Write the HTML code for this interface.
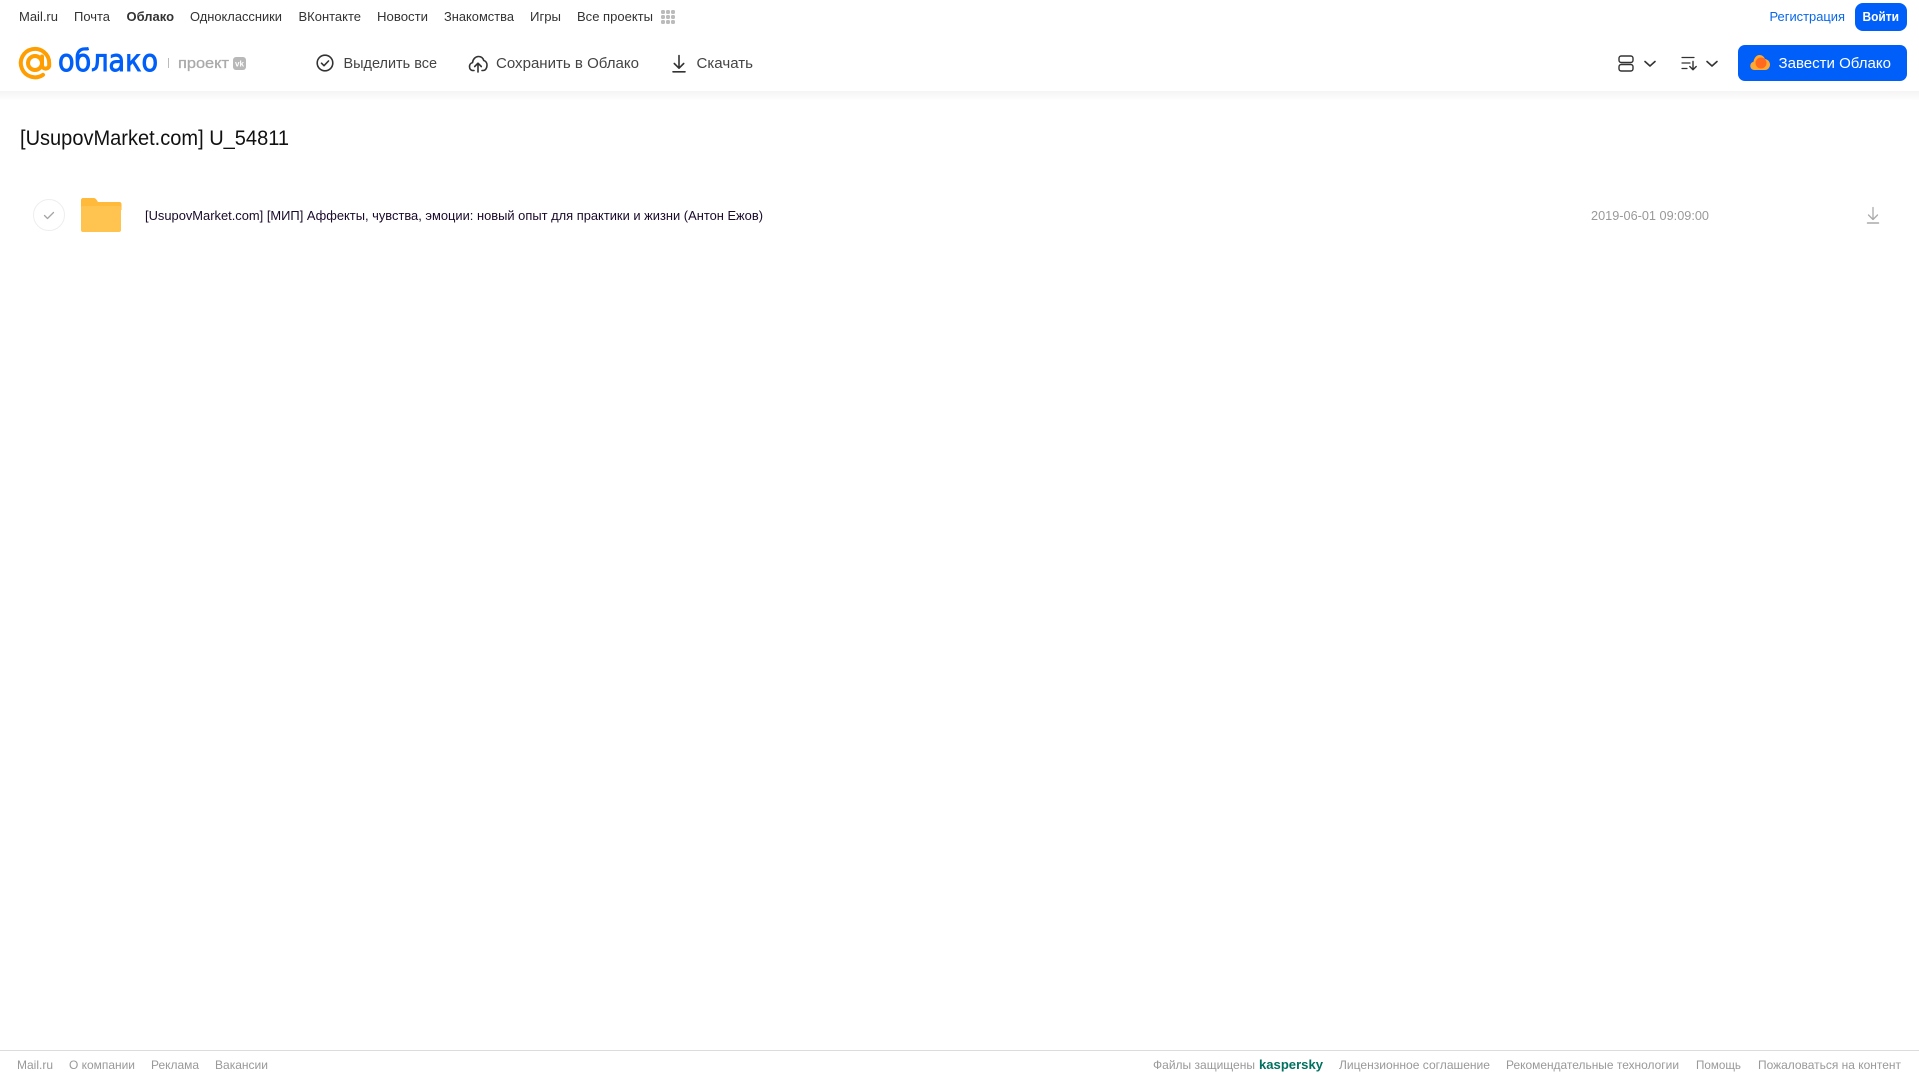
<!DOCTYPE html>
<html lang="ru">
<head>
<meta charset="utf-8">
<title>Облако Mail.ru</title>
<style>
html,body{margin:0;padding:0;width:1919px;height:1079px;overflow:hidden;background:#fff}
svg{display:block;position:absolute;left:0;top:0}
text{font-family:"Liberation Sans",Arial,sans-serif}
.n{font-size:13px;fill:#333}
.t{font-size:15px;fill:#444}
.f{font-size:12px;fill:#999}
</style>
</head>
<body>
<svg width="1919" height="1079" viewBox="0 0 1919 1079" xmlns="http://www.w3.org/2000/svg">
<defs>
<linearGradient id="sh" x1="0" y1="0" x2="0" y2="1"><stop offset="0" stop-color="#f4f4f4"/><stop offset="1" stop-color="#fff"/></linearGradient>
</defs>
<rect x="0" y="91" width="1919" height="10" fill="url(#sh)"/>

<!-- top nav -->
<text class="n" x="19" y="21" textLength="39" lengthAdjust="spacingAndGlyphs">Mail.ru</text>
<text class="n" x="74" y="21" textLength="36" lengthAdjust="spacingAndGlyphs">Почта</text>
<text class="n" x="126.500" y="21" textLength="47.500" lengthAdjust="spacingAndGlyphs" font-weight="700">Облако</text>
<text class="n" x="190" y="21" textLength="92" lengthAdjust="spacingAndGlyphs">Одноклассники</text>
<text class="n" x="298.500" y="21" textLength="62.500" lengthAdjust="spacingAndGlyphs">ВКонтакте</text>
<text class="n" x="377" y="21" textLength="51" lengthAdjust="spacingAndGlyphs">Новости</text>
<text class="n" x="444" y="21" textLength="70" lengthAdjust="spacingAndGlyphs">Знакомства</text>
<text class="n" x="530" y="21" textLength="31" lengthAdjust="spacingAndGlyphs">Игры</text>
<text class="n" x="577" y="21" textLength="76" lengthAdjust="spacingAndGlyphs">Все проекты</text>
<g fill="#bbb">
<rect x="661" y="10" width="4" height="4" rx="1.500"/><rect x="666" y="10" width="4" height="4" rx="1.500"/><rect x="671" y="10" width="4" height="4" rx="1.500"/>
<rect x="661" y="15" width="4" height="4" rx="1.500"/><rect x="666" y="15" width="4" height="4" rx="1.500"/><rect x="671" y="15" width="4" height="4" rx="1.500"/>
<rect x="661" y="20" width="4" height="4" rx="1.500"/><rect x="666" y="20" width="4" height="4" rx="1.500"/><rect x="671" y="20" width="4" height="4" rx="1.500"/>
</g>
<text class="n" x="1769.500" y="21" textLength="75.500" lengthAdjust="spacingAndGlyphs" style="fill:#0a68e8">Регистрация</text>
<rect x="1855" y="3" width="52" height="28" rx="8" fill="#005ff9"/>
<text class="n" x="1862.500" y="21" textLength="36.500" lengthAdjust="spacingAndGlyphs" font-weight="700" style="fill:#fff">Войти</text>

<!-- logo -->
<g fill="none" stroke="#ff9e00" stroke-width="4" stroke-linecap="round">
<circle cx="35" cy="63" r="7"/>
<path d="M42 56.500V65.500a3.700 3.700 0 0 0 7.200 0.500V63A14.200 14.200 0 1 0 43 74.800"/>
</g>
<text x="58" y="71" font-size="30" textLength="100" lengthAdjust="spacingAndGlyphs" fill="#005ff9" stroke="#005ff9" stroke-width=".9" style="font-family:'DejaVu Sans',sans-serif">облако</text>
<rect x="168" y="58" width="1" height="10" fill="#bbb"/>
<text x="178" y="68" font-size="15" textLength="51" lengthAdjust="spacingAndGlyphs" fill="#aaa" stroke="#aaa" stroke-width=".3">проект</text>
<rect x="233" y="57" width="13" height="13" rx="3" fill="#b8b8b8"/>
<text x="235" y="66.500" font-size="8" font-weight="700" textLength="9" lengthAdjust="spacingAndGlyphs" fill="#fff">vk</text>

<!-- toolbar -->
<g fill="none" stroke="#333" stroke-width="1.600" stroke-linecap="round" stroke-linejoin="round">
<circle cx="325" cy="63" r="7.800"/>
<path d="M321.500 63.200l2.500 2.500 4.500-4.700"/>
<path d="M474 70.500H473C470.500 70.500 469.500 68.500 469.500 66.500C469.500 64.500 470.800 63 472.500 62.600C473 59 475.500 56.500 478.500 56.500C481 56.500 483 58 483.800 60.500C485.800 61 487 63 487 65.300C487 68 485.500 70.500 483 70.500H482"/>
<path d="M478 72V63.500M474.700 66.500l3.300-3.300 3.300 3.300"/>
<path d="M679 55.500V68M674.300 63.500l4.700 4.700 4.700-4.700"/>
<path d="M673 71.800H685"/>
</g>
<text class="t" x="343.500" y="68" textLength="93.500" lengthAdjust="spacingAndGlyphs">Выделить все</text>
<text class="t" x="496" y="68" textLength="143" lengthAdjust="spacingAndGlyphs">Сохранить в Облако</text>
<text class="t" x="696.500" y="68" textLength="56.500" lengthAdjust="spacingAndGlyphs">Скачать</text>

<!-- view/sort -->
<g fill="none" stroke="#333" stroke-width="1.400" stroke-linecap="round" stroke-linejoin="round">
<rect x="1619" y="56" width="14" height="6.500" rx="2.200"/>
<rect x="1619" y="64.500" width="14" height="6.500" rx="2.200"/>
<path d="M1645 61.500l5 4.500 5-4.500" stroke-width="1.600"/>
<path d="M1707 61.500l5 4.500 5-4.500" stroke-width="1.600"/>
</g>
<g fill="none" stroke="#333" stroke-width="1.200" stroke-linecap="round" stroke-linejoin="round">
<path d="M1682 57.500h12M1682 63h8M1682 68.500h5"/>
<path d="M1693 61.500V69.500M1689.800 66.500l3.200 3.200 3.200-3.200" stroke-width="1.400"/>
</g>

<!-- CTA -->
<rect x="1738" y="45" width="169" height="36" rx="7" fill="#005ff9"/>
<path d="M1754.500 70C1751.800 70 1750.300 68 1750.300 66C1750.300 64 1751.500 62.300 1753.500 61.800C1754 58 1756.500 55 1759.500 55C1762 55 1764 56.500 1765 59C1768 59.500 1770 61.800 1770 64.500C1770 67.500 1768 70 1765 70z" fill="#ffa930"/>
<circle cx="1761" cy="63" r="5.500" fill="#ff6a1f"/>
<text x="1778.500" y="68" font-size="15" textLength="112.500" lengthAdjust="spacingAndGlyphs" fill="#fff">Завести Облако</text>

<!-- title -->
<text x="20" y="145" font-size="21" textLength="269" lengthAdjust="spacingAndGlyphs" fill="#111">[UsupovMarket.com] U_54811</text>

<!-- row -->
<circle cx="49" cy="215" r="15.500" fill="#fff" stroke="#eeeeee" stroke-width="1"/>
<path d="M44.500 215.500l3 3 6-6" fill="none" stroke="#a5a5a5" stroke-width="1.300" stroke-linecap="round" stroke-linejoin="round"/>
<path d="M83 198h10.500c1.500 0 2.300.7 3.200 2l1.300 2h21.500c1.100 0 2 .9 2 2v6H81v-10c0-1.100.9-2 2-2z" fill="#ffb93b"/>
<rect x="81" y="206" width="40" height="26" rx="2" fill="#ffc450"/>
<text x="145" y="220" font-size="13" textLength="618" lengthAdjust="spacingAndGlyphs" fill="#1a0a2a">[UsupovMarket.com] [МИП] Аффекты, чувства, эмоции: новый опыт для практики и жизни (Антон Ежов)</text>
<text x="1591" y="220" font-size="13" textLength="118" lengthAdjust="spacingAndGlyphs" fill="#999">2019-06-01 09:09:00</text>
<g fill="none" stroke="#aaa" stroke-width="1.300" stroke-linecap="round" stroke-linejoin="round">
<path d="M1873 207.500V219.500M1868.500 215l4.500 4.500 4.500-4.500"/>
<path d="M1867.500 223h11" stroke-width="1.500"/>
</g>

<!-- footer -->
<rect x="0" y="1050" width="1919" height="1" fill="#dcdcdc"/>
<text class="f" x="17" y="1069" textLength="36" lengthAdjust="spacingAndGlyphs">Mail.ru</text>
<text class="f" x="69" y="1069" textLength="66" lengthAdjust="spacingAndGlyphs">О компании</text>
<text class="f" x="151" y="1069" textLength="48" lengthAdjust="spacingAndGlyphs">Реклама</text>
<text class="f" x="215" y="1069" textLength="53" lengthAdjust="spacingAndGlyphs">Вакансии</text>
<text class="f" x="1153" y="1069" textLength="102" lengthAdjust="spacingAndGlyphs">Файлы защищены</text>
<text x="1259" y="1069" font-size="13" font-weight="700" textLength="64" lengthAdjust="spacingAndGlyphs" fill="#00705f">kaspersky</text>
<text class="f" x="1339" y="1069" textLength="151" lengthAdjust="spacingAndGlyphs">Лицензионное соглашение</text>
<text class="f" x="1506" y="1069" textLength="173" lengthAdjust="spacingAndGlyphs">Рекомендательные технологии</text>
<text class="f" x="1696" y="1069" textLength="45" lengthAdjust="spacingAndGlyphs">Помощь</text>
<text class="f" x="1758" y="1069" textLength="143" lengthAdjust="spacingAndGlyphs">Пожаловаться на контент</text>
</svg>
</body>
</html>
